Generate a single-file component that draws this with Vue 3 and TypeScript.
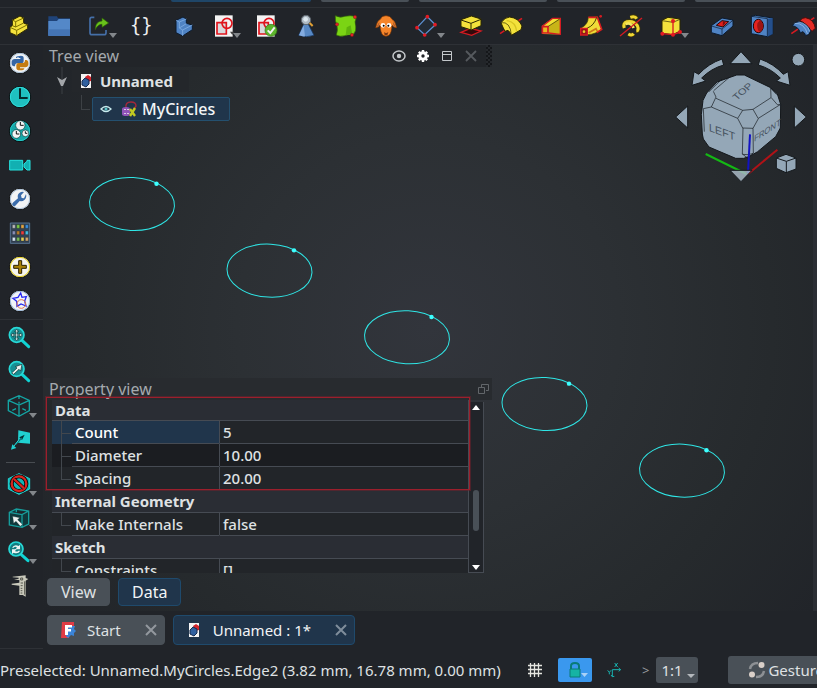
<script setup lang="ts">
import { ref } from 'vue'

interface Tool {
  name: string
  box: string
  art: string
  menu?: boolean
}

interface Property {
  name: string
  value: string
}

interface PropertyGroup {
  title: string
  rows: Property[]
}

const Y = 'fill="#f4e23c" stroke="#2a2600" stroke-width="3" stroke-linejoin="round"'
const B = 'fill="#4f83c4" stroke="#0c1a2c" stroke-width="3" stroke-linejoin="round"'

const sketchPage = (x: number): string =>
  `<path d="M${x} 46h53v64h-53z" fill="#f4f4f4"/><path d="M${x + 6} 68h28v34h-28z" fill="#d8dadc" stroke="#e0141c" stroke-width="5"/><circle cx="${x + 36}" cy="70" r="15" fill="none" stroke="#e0141c" stroke-width="5"/>`

const topTools: Tool[] = [
  { name: 'Part design', box: '21 42 72 72', art: `<path d="M37 60 60 48l11 6v15l12 5v12L50 107 30 98V81l7-4z" ${Y}/><path d="m37 60 10 5v16M47 65l24-11M47 81l24-12M30 82l20 9 33-17M50 91v16M37 77l10 4" fill="none" stroke="#7d7000" stroke-width="3"/>` },
  { name: 'Open', box: '141 42 72 72', art: '<path d="M145 49h26l3 6h36v53h-65z" fill="#1f4379"/><path d="M145 63h26l5-6h34v50h-65z" fill="#5488c8"/><path d="M145 88h65v19h-65z" fill="#4474b4"/>' },
  { name: 'Export', box: '261 42 72 72', menu: true, art: '<path d="M283 52h-8q-5 0-5 6v40q0 6 6 6h36q6 0 6-6v-8" fill="none" stroke="#456fa8" stroke-width="5"/><path d="M286 89c0-18 8-25 20-26V54l20 15-20 13v-9c-8 0-14 4-20 16z" fill="#69c21b" stroke="#2d6405" stroke-width="2"/>' },
  { name: 'Expression', box: '393 42 72 72', art: '<text x="390" y="96" font-family="DejaVu Sans Mono" font-size="56" fill="#eee">{}</text>' },
  { name: 'Body', box: '513 42 72 72', art: `<path d="m528 61 21-10 10 6v13l18 5v14l-29 19-20-10z" ${B}/><path d="m528 61 10 5v18l10 6 29-15M538 66l21-9M538 84l21-13M548 90v18" fill="none" stroke="#8db8ea" stroke-width="2"/>` },
  { name: 'Create sketch', box: '33 42 72 72', menu: true, art: sketchPage(45) + '<path d="M90 95h12l-5 10z" fill="#444"/>' },
  { name: 'Validate sketch', box: '165 42 72 72', art: sketchPage(171) + '<circle cx="213" cy="91" r="18" fill="#5cb52c" stroke="#347112" stroke-width="2"/><path d="m203 91 8 8 13-17" fill="none" stroke="#f1f1f1" stroke-width="6"/>' },
  { name: 'Check geometry', box: '285 42 72 72', art: '<path d="M311 73h14l17 33q-22 8-46 0z" fill="#5788c4" stroke="#173761" stroke-width="2"/><path d="m311 76-14 30q10 4 18 3z" fill="#84ace0"/><circle cx="318" cy="60" r="14" fill="#aeb9c3" stroke="#5e666e" stroke-width="3"/><circle cx="317" cy="58" r="7" fill="#dce7ee"/><path d="m329 69 9 9" stroke="#e0a035" stroke-width="6"/>' },
  { name: 'Shape binder', box: '405 42 72 72', art: '<path d="M406 47q15 8 29 2 15-4 35 1-8 16-3 28 3 14-8 27-13-3-25 2-14 4-25-2 6-17 1-31-5-11-4-27z" fill="#7bd414" stroke="#346b06" stroke-width="2"/><path d="m440 82 12-6 5 28-20 2z" fill="#60b30c"/><circle cx="465" cy="51" r="5" fill="#e0202a" stroke="#66070b"/><circle cx="411" cy="73" r="5" fill="#e0202a" stroke="#66070b"/><circle cx="456" cy="105" r="5" fill="#e0202a" stroke="#66070b"/>' },
  { name: 'Clone', box: '525 42 72 72', art: '<path d="M541 58q3-11 17-11t18 11q10 4 14 25-8 2-14-7-1 23-9 30-9 6-18 0-8-8-9-30-6 9-13 7 4-21 14-25z" fill="#f5852a" stroke="#6f3005" stroke-width="2"/><path d="M538 65q-6 8-9 17 7 0 9-9zM579 65q6 8 9 17-7 0-9-9z" fill="#b3602c"/><circle cx="549" cy="76" r="7" fill="#fff"/><circle cx="567" cy="76" r="7" fill="#fff"/><circle cx="551" cy="77" r="3"/><circle cx="565" cy="77" r="3"/><path d="M552 96q6 6 13 0l-3 10h-8z" fill="#7c3812"/>' },
  { name: 'Datum', box: '45 42 72 72', menu: true, art: '<path d="m51 83 31-33 24 24-32 30z" fill="#232a33" stroke="#5c90d2" stroke-width="4"/><g fill="#e31b23"><circle cx="51" cy="83" r="5.500"/><circle cx="82" cy="50" r="5.500"/><circle cx="105" cy="74" r="5.500"/><circle cx="74" cy="105" r="5.500"/></g>' },
  { name: 'Pad', box: '177 42 72 72', art: `<path d="m183 97 28-12 32 8-28 13z" fill="#32090b" stroke="#d51b22" stroke-width="4"/><path d="m183 59 31-11 29 9v20l-29 13-31-10z" ${Y}/><path d="m183 60 30 10 30-12M213 70v20" fill="none" stroke="#2a2600" stroke-width="3"/>` },
  { name: 'Revolution', box: '297 42 72 72', art: `<path d="m300 101 18-12M350 66l16-11" stroke="#d51b22" stroke-width="5"/><path d="M303 68q12-17 26-17 27 3 37 27l-3 11-29 17q-4-11-10-15l-9 3q-7-13-12-26z" ${Y}/><path d="M303 68q28-4 31 37" fill="none" stroke="#2a2600" stroke-width="2"/><path d="M320 62q26 2 30 31" fill="none" stroke="#d8c522" stroke-width="4"/>` },
  { name: 'Additive loft', box: '417 42 72 72', art: '<path d="m427 77 31-23 23 1v48h-23l-31-1z" fill="#f1df34"/><path d="M445 80 480 55v47l-35-4z" fill="#c9b417"/><path d="m427 79 31-24h23v48l-36-4" fill="none" stroke="#d51b22" stroke-width="4"/><path d="M427 80h17v19h-17z" fill="#e7bb20" stroke="#d51b22" stroke-width="5"/><path d="m445 79 34-22" stroke="#2a2600" stroke-width="2"/>' },
  { name: 'Additive pipe', box: '537 42 72 72', art: '<path d="M545 83q19-9 20-31l27-2 13 37q-17 16-43 17z" fill="#f0dd38" stroke="#4a3f00" stroke-width="2"/><path d="M565 52h27l13 36-15 10" fill="none" stroke="#d51b22" stroke-width="5"/><path d="M562 84q20-7 28-32" fill="none" stroke="#4a3f00" stroke-width="3"/><path d="m566 98 22-12 4 8" fill="none" stroke="#d07a1a" stroke-width="5"/><path d="M542 85h20v20h-20z" fill="#9a1417" stroke="#d51b22" stroke-width="4"/><circle cx="552" cy="95" r="4" fill="#e9c828"/><circle cx="602" cy="49" r="4" fill="#d51b22"/>' },
  { name: 'Additive helix', box: '36 42 72 72', art: '<path d="M70 52q14-5 19 4M52 84q-5-14 8-19 20-4 31 12 6 15-3 16M64 102q10 6 16-1" fill="none" stroke="#453b00" stroke-width="13"/><path d="M70 52q14-5 19 4M52 84q-5-14 8-19 20-4 31 12 6 15-3 16M64 102q10 6 16-1" fill="none" stroke="#eed634" stroke-width="9"/><path d="M56 72q16-6 24 12" fill="none" stroke="#f7e660" stroke-width="8"/><path d="m39 108 66-54" stroke="#d51b22" stroke-width="4"/>' },
  { name: 'Additive primitive', box: '156 42 72 72', menu: true, art: `<path d="m165 61 18-9 36 5v36l-21 11-33-4z" ${Y}/><path d="m165 62 33 5 21-9" fill="none" stroke="#2a2600" stroke-width="2"/><path d="M198 64v39M166 101l32 3 22-8" fill="none" stroke="#d51b22" stroke-width="4"/><g fill="#e31b23"><circle cx="198" cy="63" r="6"/><circle cx="166" cy="101" r="6"/><circle cx="198" cy="104" r="6"/><circle cx="219" cy="96" r="6"/></g>` },
  { name: 'Pocket', box: '312 42 72 72', art: `<path d="m316 77 32-23 33 6v18l-33 29-32-9z" ${B}/><path d="m316 78 32 9 33-26M348 87v20" fill="none" stroke="#0c1a2c" stroke-width="2"/><path d="m331 76 17-14 20 3-17 16z" fill="#e0201c" stroke="#2b0908" stroke-width="3"/><path d="m351 63 8 5-9 11z" fill="#7c0e0d"/>` },
  { name: 'Hole', box: '432 42 72 72', art: `<path d="m436 49 12-3 52 8v48l-16 8-48-9z" ${B}/><path d="m484 56 16-2v48l-16 8z" fill="#244f8c"/><path d="m436 49 48 7v53" fill="none" stroke="#0c1a2c" stroke-width="2"/><ellipse cx="457" cy="78" rx="15" ry="20" fill="#e42320" stroke="#200607" stroke-width="3"/><path d="M462 61q-14 10-5 31 7 4 12-3 6-18-7-28z" fill="#9d1413"/>` },
  { name: 'Groove', box: '552 42 72 72', art: `<path d="m556 101 22-15M606 66l19-13" stroke="#d51b22" stroke-width="5"/><path d="M582 62q6-10 17-9 25 5 29 32l-9 8-13-3q-4-20-24-28z" fill="#e22b25" stroke="#500b09" stroke-width="3"/><path d="M559 77q6-12 18-12 26 3 37 26l-4 11-11 5q-3-10-9-12l-7 4q-4-18-24-22z" ${B}/><path d="M566 70q29-2 39 33M578 66q26 4 33 29" fill="none" stroke="#a5c9ef" stroke-width="2"/>` }
]

const disc = (cy: number, fill: string, rim: string): string =>
  `<circle cx="60" cy="${cy}" r="32" fill="${fill}" stroke="#08090a" stroke-width="3"/><circle cx="60" cy="${cy}" r="29" fill="none" stroke="${rim}" stroke-width="3"/>`

const miniClock = (x: number, y: number, r: number): string =>
  `<circle cx="${x}" cy="${y}" r="${r}" fill="#f1f4f4" stroke="#063b3d" stroke-width="2"/><path d="M${x} ${y - r + 4}V${y}h${r - 4}" fill="none" stroke="#111" stroke-width="3"/>`

const swatches: string[] = ['#b8b8b8', '#7bc943', '#e1a545', '#3a8fe0', '#8a8fb5', '#b57b27', '#ea3c3c', '#45bce0', '#d5e2ef', '#79ba55', '#e0cc55', '#d2a66c']
const swatchArt = swatches
  .map((c, i) => `<path d="M${37 + (i % 4) * 13} ${314 + Math.floor(i / 4) * 19}h9v11h-9z" fill="${c}" stroke="#162029" stroke-width="1"/>`)
  .join('')

const sideTools: Tool[][] = [
  [
    { name: 'Python', box: '24 153 72 72', art: disc(189, '#f2f4f6', '#a9bfd6') + '<path d="M58 168q13-2 13 6v10q0 6-7 6H52q-7 0-7 9h-4q-8-2-6-15 2-7 9-7h17v-3H48q-1-6 10-6z" fill="#3565a4"/><path d="M62 211q-13 1-13-7v-9q0-6 7-6h12q7 0 7-9h4q8 2 6 15-2 7-9 7H60v3h13q0 6-11 6z" fill="#c47c12"/><circle cx="54" cy="173" r="2" fill="#fff"/>' },
    { name: 'Recent', box: '24 255 72 72', art: disc(291, '#1fc0c0', '#2fdcdb') + '<path d="M60 265v29h23" fill="none" stroke="#042b2d" stroke-width="6"/>' },
    { name: 'World clock', box: '24 -3 72 72', art: disc(33, '#16a9a9', '#24c9c8') + miniClock(61, 16, 14) + miniClock(49, 42, 13) + miniClock(76, 40, 10) },
    { name: 'Record', box: '24 99 72 72', art: '<path d="M29 121h39v29H29zM72 132l9-8V121h9v29h-9l-9-9z" fill="#12b0b2" stroke="#27e3e0" stroke-width="3"/>' },
    { name: 'Preferences', box: '24 201 72 72', art: disc(237, '#f2f4f6', '#a9bfd6') + '<path d="M78 222q3 10-4 17-7 6-15 4L46 257q-6 3-9-3-1-4 3-7l14-12q-3-10 4-16 7-5 14-3l-9 10 2 8 7 1z" fill="#3b6cab"/>' },
    { name: 'Add-ons', box: '24 303 72 72', art: `<path d="M31 309h58v61H31z" fill="#334253" stroke="#56728f" stroke-width="3"/>${swatchArt}` },
    { name: 'Add', box: '24 405 72 72', art: disc(441, '#f6f5ef', '#e5cf19') + '<path d="M56 422h9v14h14v9H65v15h-9v-15H41v-9h15z" fill="#a88004" stroke="#2c2200" stroke-width="3"/>' },
    { name: 'Favourites', box: '24 507 72 72', art: disc(543, '#f1f3f8', '#9db9d8') + '<path d="m62 519 4 13 13-2-5 13 4 15-15-6-12 7-1-15-11-9 15-3z" fill="none" stroke="#2526f0" stroke-width="4"/><circle cx="64" cy="552" r="13" fill="none" stroke="#e27849" stroke-width="3"/>' }
  ],
  [
    { name: 'Fit all', box: '24 48 72 72', art: '<path d="m66 91 20 19" stroke="#10d4d4" stroke-width="9" stroke-linecap="round"/><circle cx="50" cy="75" r="22" fill="#178f93" stroke="#27d9d7" stroke-width="5"/><path d="m50 58 6 7h-4v8h8v-4l7 6-7 6v-4h-8v8h4l-6 7-6-7h4v-8h-8v4l-7-6 7-6v4h8v-8h-4z" fill="#d9f1ef" stroke="#0a3032" stroke-width="2"/>' },
    { name: 'Fit selection', box: '24 150 72 72', art: '<path d="m66 193 20 19" stroke="#10d4d4" stroke-width="9" stroke-linecap="round"/><circle cx="50" cy="177" r="22" fill="#178f93" stroke="#27d9d7" stroke-width="5"/><path d="m35 189 16-15-5-4 20-7-4 20-5-5-16 15z" fill="#e9efed" stroke="#0a3032" stroke-width="2"/>' },
    { name: 'Isometric', box: '24 252 72 72', menu: true, art: '<path d="m25 271 32-14 31 14v31l-31 17-32-17zM25 271l32 14 31-14M57 285v34M57 258v9M37 301l11-5M78 301l-11-5M57 281v-6" fill="none" stroke="#14a5a4" stroke-width="4"/>' },
    { name: 'Align view', box: '24 354 72 72', art: '<path d="m55 361 35 7v33l-36-3z" fill="#20d1d0"/><path d="m74 374-16 8 8 8z" fill="#052f31"/><path d="m65 384-18 19" stroke="#0b7779" stroke-width="4"/><path d="m33 419 4-16 12 11z" fill="#20d1d0"/><path d="m56 390-14 18" stroke="#27dedd" stroke-width="3"/>' }
  ],
  [
    { name: 'Draw style', box: '24 66 72 72', menu: true, art: '<path d="m25 86 32-15 32 15v31l-32 16-32-16z" fill="#10b5b6" stroke="#24d8d7" stroke-width="3"/><circle cx="57" cy="101" r="22" fill="#12b6b6" stroke="#08090a" stroke-width="12"/><circle cx="57" cy="101" r="22" fill="none" stroke="#d9261f" stroke-width="7"/><path d="m42 87 30 28" stroke="#08090a" stroke-width="11"/><path d="m42 87 30 28" stroke="#d9261f" stroke-width="7"/>' },
    { name: 'Selection', box: '24 168 72 72', menu: true, art: '<path d="m28 187 21-10 37 6v39l-20 10-38-7zM28 187l38 7 20-11M66 194v38M49 178v9" fill="#10383b" stroke="#179d9c" stroke-width="4"/><path d="m38 199 21 4-6 6 14 14-6 6-13-15-7 6z" fill="#edf1f0" stroke="#17393b"/>' },
    { name: 'Refresh view', box: '24 270 72 72', menu: true, art: '<path d="m64 314 20 18" stroke="#10d4d4" stroke-width="9" stroke-linecap="round"/><circle cx="48" cy="297" r="21" fill="#127d80" stroke="#27d9d7" stroke-width="5"/><path d="M36 293q7-12 20-5l4-4v14H46l5-5q-6-5-10 0zM61 302q-7 11-20 6l-5 4v-14h14l-5 5q6 4 10-1z" fill="#edf4f3"/>' },
    { name: 'Measure', box: '24 372 72 72', art: '<path d="m38 380 39-4v8l8 3-8 5v48l-9-5h-10v-28l-23-3v-3l23-3v-8l-16-1 14-3v-3l-18-1z" fill="#c9c9bb"/><path d="M62 384v6h6v-6zM62 399h7M62 407h6M62 415h5M62 422h5M62 429h5M74 394v40" fill="none" stroke="#55564e" stroke-width="3"/>' }
  ]
]

const ellipses = Array.from({ length: 5 }, (_, i) => ({ x: 89 + i * 137.5, y: 159 + i * 66.65 }))

const groups = ref<PropertyGroup[]>([
  { title: 'Data', rows: [{ name: 'Count', value: '5' }, { name: 'Diameter', value: '10.00' }, { name: 'Spacing', value: '20.00' }] },
  { title: 'Internal Geometry', rows: [{ name: 'Make Internals', value: 'false' }] },
  { title: 'Sketch', rows: [{ name: 'Constraints', value: '[]' }] }
])

const selected = ref('Count')
const panelTab = ref('Data')
const expanded = ref(true)
</script>

<template>
  <div class="app">
    <div class="strip"><i class="current"></i><i class="short"></i><i></i><i></i><i></i></div>
    <nav class="toolbar" aria-label="Modelling">
      <template v-for="tool in topTools" :key="tool.name">
        <span v-if="tool.name === 'Pocket'" class="vrule"></span>
        <button class="tool" :class="{ menu: tool.menu }" :aria-label="tool.name">
          <svg :viewBox="tool.box" v-html="tool.art"></svg>
        </button>
      </template>
    </nav>

    <div class="work">
      <nav class="side" aria-label="View">
        <div v-for="(set, i) in sideTools" :key="i" class="set">
          <button v-for="tool in set" :key="tool.name" class="tool" :class="{ menu: tool.menu }" :aria-label="tool.name">
            <svg :viewBox="tool.box" v-html="tool.art"></svg>
          </button>
        </div>
      </nav>

      <div class="main">
        <main class="scene">
          <svg class="shapes" aria-hidden="true">
            <g v-for="(e, i) in ellipses" :key="i" :transform="`translate(${e.x} ${e.y})`">
              <ellipse rx="42.500" ry="26.500" transform="rotate(3)" fill="none" stroke="#2fe6e6" />
              <circle cx="24.500" cy="-20.300" r="2.200" fill="#3dffff" />
            </g>
          </svg>

          <svg class="cube" viewBox="198 135 420 420" aria-hidden="true">
            <g fill="#94a7b7" stroke="#14181c" stroke-width="3" stroke-linejoin="round">
              <path d="m402 155 33 36h-66z" />
              <path d="m206 351 36-33v66z" />
              <path d="m598 351-36-33v66z" />
              <path d="M345 177q-41 14-70 46l-14-8-6 41 41-13-12-9q29-29 66-39z" />
              <path d="M459 177q41 14 70 46l14-8 6 41-41-13 12-9q-29-29-66-39z" />
              <circle cx="574" cy="179" r="19" />
              <path d="m508 474 29-11 30 11v33l-30 11-29-13z" />
              <path d="m508 474 30 10 29-10M538 484v34" fill="none" />
              <path d="m366 233 23-8h23l79 38 20 19 10 31-1 71-14 26-54 45-24 14-18 6h-24l-80-34-17-24-3-15-3-58 5-43 11-22 31-33z" />
              <g fill="none" stroke-width="2">
                <path d="m366 233-46 39M319 274l8 17-14 30-24 5M327 295l80 36-15 24-79-34M392 355l15 29 31 1 16-29-16-28-31 3M454 355l67-42M491 264l1 28 19 22h10M438 328l54-35M438 385l1 74-17 16M408 384l-2 78 17 13M406 463l18 1 15-4M289 326l3 69M306 275l39-38M491 265l18 19" />
              </g>
            </g>
            <g fill="#46525e" font-family="Liberation Sans">
              <text transform="matrix(.8 -.68 .7 .6 389 302)" font-size="31">TOP</text>
              <text transform="matrix(.98 .36 .02 1 306 393)" font-size="33">LEFT</text>
              <text transform="matrix(.86 -.56 -.05 1 441 426)" font-size="27">FRONT</text>
            </g>
            <path d="m296 462 122 60" stroke="#14b814" stroke-width="6" />
            <path d="m424 521 87-72" stroke="#b01217" stroke-width="6" />
            <path d="m429 403-6 116" stroke="#1212c4" stroke-width="6" />
            <path d="M369 511h66l-33 34z" fill="#a9b9c5" fill-opacity=".85" stroke="#14181c" stroke-width="3" />
          </svg>

          <section class="tree">
            <header class="head">
              <h2>Tree view</h2>
              <button aria-label="Show"><svg viewBox="0 0 14 14"><path d="M1 7a6 5 0 0 1 12 0 6 5 0 0 1-12 0z" fill="none" stroke="#c3c7ca" stroke-width="1.500" /><circle cx="7" cy="7" r="2.200" fill="#c3c7ca" /></svg></button>
              <button aria-label="Settings"><svg viewBox="0 0 14 14"><circle cx="7" cy="7" r="3.200" fill="none" stroke="#fff" stroke-width="3" /><path d="M7 1v2M7 11v2M1 7h2M11 7h2M2.800 2.800l1.400 1.400M9.800 9.800l1.400 1.400M11.200 2.800 9.800 4.200M4.200 9.800l-1.400 1.400" stroke="#fff" stroke-width="2.400" /></svg></button>
              <button aria-label="Float"><svg viewBox="0 0 14 14"><path d="M2.500 2.500h9v9h-9zM2.500 5.500h9" fill="none" stroke="#c3c7ca" /></svg></button>
              <button aria-label="Close"><svg viewBox="0 0 14 14"><path d="m2 2 10 10M12 2 2 12" stroke="#565a5e" stroke-width="1.800" /></svg></button>
              <span class="grip"></span>
            </header>
            <ul class="nodes">
              <li class="doc">
                <button class="twist" aria-label="Toggle" @click="expanded = !expanded"><svg viewBox="0 0 12 28"><path d="M6 0v27" stroke="#3d4145" /><path d="m1 10 5 3 5-3-4 9H5z" fill="#a3a6aa" /></svg></button>
                <span class="label"><svg class="file" viewBox="0 0 12 16"><path d="M1 1h10v14H1z" fill="#f4f4f4" /><path d="m5 4 3-2 3 2v4L7 9z" fill="#d3232a" /><path d="m2 8 3-3 4 2v4l-3 3-4-2z" fill="#30609f" stroke="#152b4e" /></svg>Unnamed</span>
              </li>
              <li v-if="expanded" class="item">
                <span class="branch"></span>
                <span class="chosen">
                  <svg class="eye" viewBox="0 0 12 12"><path d="M1 6q5-5 10 0-5 5-10 0z" fill="none" stroke="#c9ebee" stroke-width="1.300" /><circle cx="6" cy="6" r="1.500" fill="#5fc8cc" /></svg>
                  <svg class="fx" viewBox="0 0 16 16"><path d="M5 7q-1-6 5-6 5 0 5 4l-2 3" fill="none" stroke="#a5283a" stroke-width="1.400" /><path d="M1 8q0-2 4-2 4 0 4 2v5q0 2-4 2-4 0-4-2z" fill="#9054b8" /><path d="M4 8v1M4 12v1M7 8v1M7 12v1" stroke="#eee" stroke-width="1.500" /><path d="m9 8 5 7M14 7l-5 8" stroke="#c2c922" stroke-width="2.400" /></svg>
                  MyCircles
                </span>
              </li>
            </ul>
          </section>

          <section class="props">
            <header class="head low">
              <h2>Property view</h2>
              <button aria-label="Detach"><svg viewBox="0 0 14 14"><path d="M5.500 5V2.500h7v6H10M2.500 5.500h6v6h-6z" fill="none" stroke="#62666a" /></svg></button>
            </header>
            <div class="grid">
              <div class="clip">
                <table>
                  <colgroup><col class="names"><col></colgroup>
                  <tbody v-for="group in groups" :key="group.title">
                    <tr class="group"><th colspan="2" scope="rowgroup">{{ group.title }}</th></tr>
                    <tr v-for="row in group.rows" :key="row.name" :class="{ picked: selected === row.name }" @click="selected = row.name">
                      <th scope="row"><span>{{ row.name }}</span></th>
                      <td>{{ row.value }}</td>
                    </tr>
                  </tbody>
                </table>
              </div>
              <div class="bar"><i class="up"></i><i class="thumb"></i><i class="down"></i></div>
              <div class="mark"></div>
            </div>
            <div class="switch">
              <button v-for="tab in ['View', 'Data']" :key="tab" class="pill" :class="{ on: panelTab === tab }" @click="panelTab = tab">{{ tab }}</button>
            </div>
          </section>
        </main>

        <div class="tabs">
          <div class="tab">
            <svg viewBox="0 0 16 16"><path d="M2 0h12v5H9v11H1z" fill="#e03c45" /><path d="M10 4h5l-1 3 2 2-2 2v3l-3-1-3 3-2-2V9z" fill="#3b84d8" /><path d="M5 3h7v2.500H8V7h3v2.500H8V13H5z" fill="#fff" /></svg>
            <a href="#start">Start</a>
            <button aria-label="Close Start"><svg viewBox="0 0 14 14"><path d="m2 2 10 10M12 2 2 12" stroke="#93989e" stroke-width="2" /></svg></button>
          </div>
          <div class="tab on">
            <svg viewBox="0 0 16 16"><path d="M3 1h10v14H3z" fill="#f4f4f4" /><path d="m7 4 3-2 3 2v4L9 9z" fill="#d3232a" /><path d="m4 8 3-3 4 2v4l-3 3-4-2z" fill="#30609f" stroke="#152b4e" /></svg>
            <a href="#document">Unnamed : 1*</a>
            <button aria-label="Close Unnamed"><svg viewBox="0 0 14 14"><path d="m2 2 10 10M12 2 2 12" stroke="#7f8d9b" stroke-width="2" /></svg></button>
          </div>
        </div>
      </div>
    </div>

    <footer class="status">
      <span class="message">Preselected: Unnamed.MyCircles.Edge2 (3.82 mm, 16.78 mm, 0.00 mm)</span>
      <button class="plain" aria-label="Grid"><svg viewBox="0 0 16 16"><path d="M3.500 1v14M7.500 1v14M11.500 1v14M1 3.500h14M1 7.500h14M1 11.500h14" stroke="#e5e5e0" stroke-width="1.300" /></svg></button>
      <button class="lock" aria-label="Snap"><svg viewBox="0 0 34 24"><path d="M13 11V8q0-3 4-3t4 3v3" fill="none" stroke="#087b78" stroke-width="2" /><path d="M12 11h10v8H12z" fill="#16b3a4" stroke="#087b78" /><path d="M23 15h7l-3.500 4z" fill="#a9d1f7" /></svg></button>
      <button class="plain" aria-label="Axes"><svg viewBox="228 186 48 48"><path d="M247 230v-21h24M243 225l4 5 6-1M266 204l6 5-6 5M254 189l9 12M263 189l-9 12M233 211l5 6 5-6M238 217v6" fill="none" stroke="#18b3b0" stroke-width="3" /></svg></button>
      <span class="more">&gt;</span>
      <label class="pick zoom"><select aria-label="Scale"><option>1:1</option></select></label>
      <label class="pick nav"><svg viewBox="0 0 18 18"><path d="M2 8q1-6 8-6M16 10q-1 6-8 6" fill="none" stroke="#8d9094" stroke-width="2.500" /><circle cx="13.500" cy="4" r="3" fill="#d9cfc8" /><circle cx="4" cy="13.500" r="3" fill="#d9cfc8" /></svg><select aria-label="Navigation style"><option>Gesture</option></select></label>
    </footer>
  </div>
</template>

<style>
body {
  margin: 0;
  background: #212429;
}
</style>

<style scoped>
.app {
  display: flex;
  flex-direction: column;
  height: 100vh;
  overflow: hidden;
  background: #212429;
  color: #dfe1e3;
  font: 15px/22px "Noto Sans", "Open Sans", sans-serif;
}
button, select {
  font: inherit;
  color: inherit;
  border: 0;
  padding: 0;
  background: none;
}
svg {
  display: block;
  flex: none;
}
.strip {
  display: flex;
  flex: none;
  gap: 10px;
  height: 7px;
  padding-left: 171px;
  border-bottom: 1px solid #2e3136;
}
.strip i {
  flex: none;
  width: 128px;
  height: 2px;
  background: #495057;
  border-radius: 0 0 4px 4px;
}
.strip .short { width: 88px; }
.strip .current {
  width: 140px;
  background: #1f4668;
}
.toolbar {
  display: flex;
  flex: none;
  align-items: center;
  height: 36px;
  border-bottom: 1px solid #2e3136;
}
.tool {
  position: relative;
  flex: none;
}
.tool svg {
  width: 24px;
  height: 24px;
  overflow: visible;
}
.toolbar .tool { padding: 0 9px 0 7px; }
.toolbar .menu { padding-right: 13px; }
.tool.menu::after {
  content: "";
  position: absolute;
  right: 7px;
  bottom: 0;
  border: 4px solid transparent;
  border-top: 5px solid #83878b;
  border-bottom: 0;
}
.vrule {
  width: 1px;
  height: 21px;
  margin: 0 5px 0 2px;
  background: #50545a;
}
.work {
  display: flex;
  flex: 1;
  min-height: 0;
}
.side {
  flex: none;
  width: 43px;
  padding-top: 1px;
  border-bottom: 1px solid #2e3136;
}
.set + .set {
  padding-top: 1px;
  margin-top: 1px;
  border-top: 1px solid #2e3136;
}
.set:last-child {
  position: relative;
  padding-top: 4px;
  margin-top: 5px;
  border-top-color: transparent;
}
.set:last-child::before {
  content: "";
  position: absolute;
  top: -1px;
  left: 6px;
  right: 8px;
  border-top: 1px solid #484c51;
}
.side .tool {
  display: block;
  padding: 5px 11px 5px 8px;
}
.side .tool.menu::after { right: 6px; bottom: 5px; }
.main {
  display: flex;
  flex: 1;
  flex-direction: column;
  min-width: 0;
}
.scene {
  position: relative;
  display: flex;
  flex: 1;
  flex-direction: column;
  justify-content: space-between;
  min-height: 0;
  background: radial-gradient(circle at 50% 50%, #32353c 0, #2c3034 40%, #262a2d 72%, #212429 100%);
  border-right: 4px solid #2b2e34;
}
.shapes {
  position: absolute;
  inset: 0;
  width: 100%;
  height: 100%;
}
.cube {
  position: absolute;
  top: 0;
  right: 0;
  width: 140px;
  height: 140px;
}
.tree, .props {
  position: relative;
  width: 449px;
}
.head {
  display: flex;
  align-items: center;
  gap: 10px;
  height: 22px;
  padding-left: 6px;
  background: #222529;
}
.head.low {
  padding-right: 2px;
  background: #282b2f;
}
h2 {
  flex: 1;
  margin: 0;
  font-size: 16px;
  font-weight: 400;
  color: #a4a9ae;
}
.head svg { width: 14px; height: 14px; }
.grip {
  width: 6px;
  height: 22px;
  margin-left: -2px;
  background: repeating-conic-gradient(#15171a 0 25%, #26292d 0 50%) 0 0 / 4px 4px;
}
.nodes {
  margin: 0;
  padding: 0 0 0 13px;
  list-style: none;
}
.nodes li { display: flex; height: 28px; align-items: center; }
.twist svg { width: 12px; height: 28px; }
.label {
  display: flex;
  align-items: center;
  gap: 8px;
  height: 22px;
  padding: 0 16px 0 8px;
  margin-left: 4px;
  background: #24272b;
  font-weight: 700;
}
.file { width: 12px; height: 16px; }
.branch {
  width: 8px;
  height: 14px;
  margin: -14px 3px 0 25px;
  border: solid #3d4145;
  border-width: 0 0 1px 1px;
}
.chosen {
  display: flex;
  align-items: center;
  height: 22px;
  padding: 0 14px 0 7px;
  margin-left: -1px;
  border: 1px solid #24506f;
  border-radius: 2px;
  background: #20354b;
  color: #f3f5f7;
  font-size: 16px;
  font-weight: 500;
}
.eye { width: 12px; height: 12px; margin-right: 9px; }
.fx { width: 16px; height: 16px; margin-right: 5px; }
.grid {
  position: relative;
  display: flex;
  height: 173px;
  margin: 0 8px 0 9px;
}
.clip {
  flex: 1;
  overflow: hidden;
  border-right: 1px solid #464b53;
}
table {
  width: 100%;
  border-spacing: 0;
  table-layout: fixed;
  background: #222529;
}
.names { width: 168px; }
th, td {
  height: 22px;
  padding: 0 0 0 3px;
  line-height: 22px;
  text-align: left;
  font-weight: 500;
  border-bottom: 1px solid #464b53;
}
.group th {
  background: #2a2d34;
  font-weight: 700;
}
tbody:first-of-type .group th { height: 20px; line-height: 20px; }
tbody tr:nth-child(odd):not(.group) { background: #1b1d21; }
tr:not(.group) th {
  position: relative;
  padding: 0 0 0 23px;
  border-right: 1px solid #464b53;
  border-bottom-color: transparent;
}
tr:not(.group) th::before {
  content: "";
  position: absolute;
  left: 9px;
  top: 0;
  width: 9px;
  height: 12px;
  border: solid #42474d;
  border-width: 0 0 1px 1px;
}
tr:not(.group):not(:last-child) th::after {
  content: "";
  position: absolute;
  left: 9px;
  top: 12px;
  height: 11px;
  border-left: 1px solid #42474d;
}
th span {
  display: block;
  border-bottom: 1px solid #464b53;
  margin: 0 0 -1px -3px;
  padding-left: 3px;
}
tr.picked th { background: #20354b; color: #fff; }
.bar {
  display: flex;
  flex-direction: column;
  align-items: center;
  width: 14px;
  padding: 3px 0 2px;
  margin-top: 2px;
  border: solid #464b53;
  border-width: 0 1px 1px 0;
  background: #212429;
}
.up, .down { border: 4px solid transparent; }
.up { border-top: 0; border-bottom: 5px solid #fff; }
.down { border-bottom: 0; border-top: 5px solid #fff; }
.thumb {
  width: 6px;
  height: 41px;
  margin: auto 0 34px;
  border-radius: 3px;
  background: #495057;
}
.mark {
  position: absolute;
  inset: -3px 14px auto -6px;
  height: 91px;
  border: 1px solid #9c1f2c;
  box-shadow: 0 0 0 1px #741f2b88;
}
.switch {
  display: flex;
  gap: 8px;
  padding: 5px 4px;
}
.pill, .tab {
  box-sizing: border-box;
  border: 1px solid #495057;
  border-radius: 4px;
  background: #495057;
}
.pill { height: 28px; padding: 0 13px; font-size: 16px; }
.pill.on, .tab.on {
  background: #20354b;
  border-color: #1f4a6c;
  color: #f2f4f6;
}
.tabs {
  display: flex;
  gap: 8px;
  padding: 4px;
}
.tab {
  display: flex;
  align-items: center;
  height: 30px;
  padding: 0 6px 0 12px;
}
.tab > svg { width: 16px; height: 16px; margin-right: 11px; }
.tab a { color: inherit; text-decoration: none; margin-right: 23px; }
.tab button svg { width: 14px; height: 14px; }
.status {
  display: flex;
  flex: none;
  align-items: center;
  height: 36px;
  padding-top: 3px;
  white-space: nowrap;
}
.message { flex: 0 0 527px; }
.plain svg { width: 16px; height: 16px; }
.lock {
  margin: 0 14px 0 15px;
  border-radius: 2px;
  background: #3a98ee;
}
.lock svg { width: 34px; height: 24px; }
.more { margin: 0 7px 0 20px; color: #9a9da1; font-size: 13px; }
.pick {
  position: relative;
  display: flex;
  flex: none;
  align-items: center;
  box-sizing: border-box;
  border-radius: 3px;
  background: #495057;
}
.pick select { appearance: none; outline: 0; }
.zoom { width: 42px; height: 26px; padding-left: 5px; }
.zoom::after {
  content: "";
  position: absolute;
  right: 3px;
  bottom: 5px;
  border: 4px solid transparent;
  border-top: 4px solid #b4b8bc;
  border-bottom: 0;
}
.nav { width: 130px; height: 28px; margin-left: 30px; padding-left: 20px; gap: 2px; }
.nav svg { width: 18px; height: 18px; }
</style>
